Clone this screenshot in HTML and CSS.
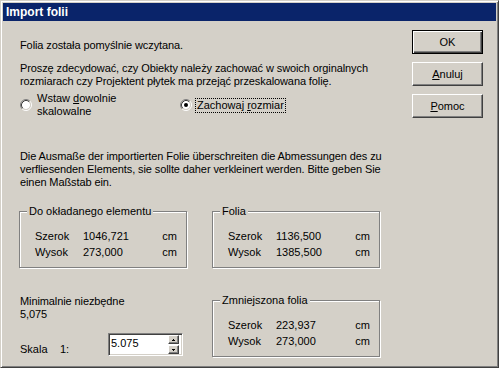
FILE: index.html
```html
<!DOCTYPE html>
<html lang="pl">
<head>
<meta charset="utf-8">
<title>Import folii</title>
<link rel="stylesheet" href="styles.css">
</head>
<body>
<div class="window">
  <div class="titlebar">Import folii</div>
  <div class="body">
    <div class="main">
      <p class="msg msg-first">Folia została pomyślnie wczytana.</p>
      <p class="msg msg-question">Proszę zdecydować, czy Obiekty należy zachować w swoich orginalnych<br>rozmiarach czy Projektent płytek ma przejąć przeskalowana folię.</p>
      <div class="radios">
        <label class="radio radio-free">
          <svg class="radio-icon" viewBox="0 0 12 12" width="12" height="12">
            <circle cx="6" cy="6" r="4" fill="#fff"/>
            <path d="M9.89 2.11A5.5 5.5 0 0 0 2.11 9.89" fill="none" stroke="#808080"/>
            <path d="M2.11 9.89A5.5 5.5 0 0 0 9.89 2.11" fill="none" stroke="#fff"/>
            <path d="M9.18 2.82A4.5 4.5 0 0 0 2.82 9.18" fill="none" stroke="#404040"/>
            <path d="M2.82 9.18A4.5 4.5 0 0 0 9.18 2.82" fill="none" stroke="#d4d0c8"/>
          </svg>
          <span>Wstaw <u>d</u>owolnie<br>skalowalne</span>
        </label>
        <label class="radio radio-keep">
          <svg class="radio-icon" viewBox="0 0 12 12" width="12" height="12">
            <circle cx="6" cy="6" r="4" fill="#fff"/>
            <path d="M9.89 2.11A5.5 5.5 0 0 0 2.11 9.89" fill="none" stroke="#808080"/>
            <path d="M2.11 9.89A5.5 5.5 0 0 0 9.89 2.11" fill="none" stroke="#fff"/>
            <path d="M9.18 2.82A4.5 4.5 0 0 0 2.82 9.18" fill="none" stroke="#404040"/>
            <path d="M2.82 9.18A4.5 4.5 0 0 0 9.18 2.82" fill="none" stroke="#d4d0c8"/>
            <circle cx="6" cy="6" r="2" fill="#000"/>
          </svg>
          <span class="focus">Zachowaj <u>r</u>ozmiar</span>
        </label>
      </div>
      <p class="msg msg-warn">Die Ausmaße der importierten Folie überschreiten die Abmessungen des zu<br>verfliesenden Elements, sie sollte daher verkleinert werden. Bitte geben Sie<br>einen Maßstab ein.</p>
      <div class="groups">
        <fieldset class="group">
          <legend>Do okładanego elementu</legend>
          <div class="grid">
            <span>Szerok</span><span>1046,721</span><span>cm</span>
            <span>Wysok</span><span>273,000</span><span>cm</span>
          </div>
        </fieldset>
        <fieldset class="group">
          <legend>Folia</legend>
          <div class="grid">
            <span>Szerok</span><span>1136,500</span><span>cm</span>
            <span>Wysok</span><span>1385,500</span><span>cm</span>
          </div>
        </fieldset>
      </div>
      <div class="lower">
        <div class="lower-left">
          <p class="msg">Minimalnie niezbędne<br>5,075</p>
          <div class="scale">
            <div class="scale-label"><span class="scale-word">Skala</span>1:</div>
            <div class="spin-edit">
              <span class="spin-value">5.075</span>
              <div class="spin">
                <div class="spin-btn"><svg width="3" height="2" viewBox="0 0 3 2"><path d="M1 0h1v1h1v1H0V1h1z" fill="#000"/></svg></div>
                <div class="spin-btn"><svg width="3" height="2" viewBox="0 0 3 2"><path d="M0 0h3v1H2v1H1V1H0z" fill="#000"/></svg></div>
              </div>
            </div>
          </div>
        </div>
        <fieldset class="group">
          <legend>Zmniejszona folia</legend>
          <div class="grid">
            <span>Szerok</span><span>223,937</span><span>cm</span>
            <span>Wysok</span><span>273,000</span><span>cm</span>
          </div>
        </fieldset>
      </div>
    </div>
    <div class="buttons">
      <button class="btn btn-default">OK</button>
      <button class="btn"><u>A</u>nuluj</button>
      <button class="btn"><u>P</u>omoc</button>
    </div>
  </div>
</div>
</body>
</html>
```
FILE: styles.css
```css
* { box-sizing: border-box; }
html, body { margin: 0; padding: 0; }
body {
  background: #d4d0c8;
  font-family: "Liberation Sans", Arial, sans-serif;
  font-size: 11px;
  color: #000;
}
.window {
  width: 499px;
  height: 368px;
  background: #d4d0c8;
  border: 1px solid;
  border-color: #d4d0c8 #404040 #404040 #d4d0c8;
  box-shadow: inset 1px 1px #fff, inset -1px -1px #808080;
  padding: 2px;
  display: flex;
  flex-direction: column;
}
.titlebar {
  height: 18px;
  background: #0a246a;
  color: #fff;
  font-weight: bold;
  font-size: 12px;
  line-height: 18px;
  padding-left: 3px;
}
.body { display: flex; flex: 1; }
.main { width: 409px; padding-left: 17px; flex: none; }
.msg { margin: 0; line-height: 13px; white-space: nowrap; letter-spacing: -0.1px; }
.msg-first { margin-top: 18px; }
.msg-question { margin-top: 10px; }
.msg-warn { margin-top: 32px; }
.radios { display: flex; margin-top: 4px; }
.radio { display: flex; align-items: center; line-height: 13px; }
.radio-free { width: 160px; }
.radio-icon { flex: none; margin-right: 5px; display: block; }
.radio-keep .radio-icon { margin-right: 4px; }
.focus { outline: 1px dotted #000; padding: 0 1px; }
.groups { display: flex; gap: 25px; margin-top: 16px; margin-left: -1px; }
.group {
  width: 168px;
  margin: 0;
  padding: 10px 0 7px 0;
  border: 1px solid #808080;
  box-shadow: 1px 1px 0 #fff, inset 1px 1px 0 #fff;
  min-width: 0;
}
.group legend {
  padding: 0 2px;
  margin-left: 7px;
  line-height: 13px;
  background: #d4d0c8;
}
.grid {
  display: grid;
  grid-template-columns: 48px 1fr auto;
  line-height: 16px;
  padding-left: 15px;
  padding-right: 9px;
}
.lower { display: flex; margin-top: 26px; }
.lower-left { width: 192px; padding-top: 1px; flex: none; }
.scale { display: flex; align-items: flex-start; margin-top: 12px; }
.scale-label { width: 88px; padding-top: 10px; line-height: 13px; flex: none; }
.scale-word { display: inline-block; width: 40px; }
.spin-edit {
  display: flex;
  width: 75px;
  height: 23px;
  background: #fff;
  border: 1px solid;
  border-color: #808080 #fff #fff #808080;
  box-shadow: inset 1px 1px #404040, inset -1px -1px #d4d0c8;
  padding: 1px 2px 1px 2px;
}
.spin-value { line-height: 13px; padding-top: 2px; flex: 1; }
.spin { display: flex; flex-direction: column; gap: 1px; width: 11px; margin-right: 1px; }
.spin-btn {
  height: 9px;
  background: #d4d0c8;
  border: 1px solid;
  border-color: #fff #404040 #404040 #fff;
  box-shadow: inset -1px -1px #808080;
  display: flex;
  align-items: center;
  justify-content: center;
}
.spin-btn svg { display: block; }
.buttons { display: flex; flex-direction: column; gap: 8px; margin-top: 9px; }
.btn {
  width: 71px;
  height: 24px;
  padding: 0;
  font: inherit;
  color: #000;
  background: #d4d0c8;
  border: 1px solid;
  border-color: #fff #404040 #404040 #fff;
  box-shadow: inset -1px -1px #808080;
}
.btn-default {
  border: 1px solid #000;
  box-shadow: inset 1px 1px #fff, inset -1px -1px #404040, inset -2px -2px #808080;
}
```
